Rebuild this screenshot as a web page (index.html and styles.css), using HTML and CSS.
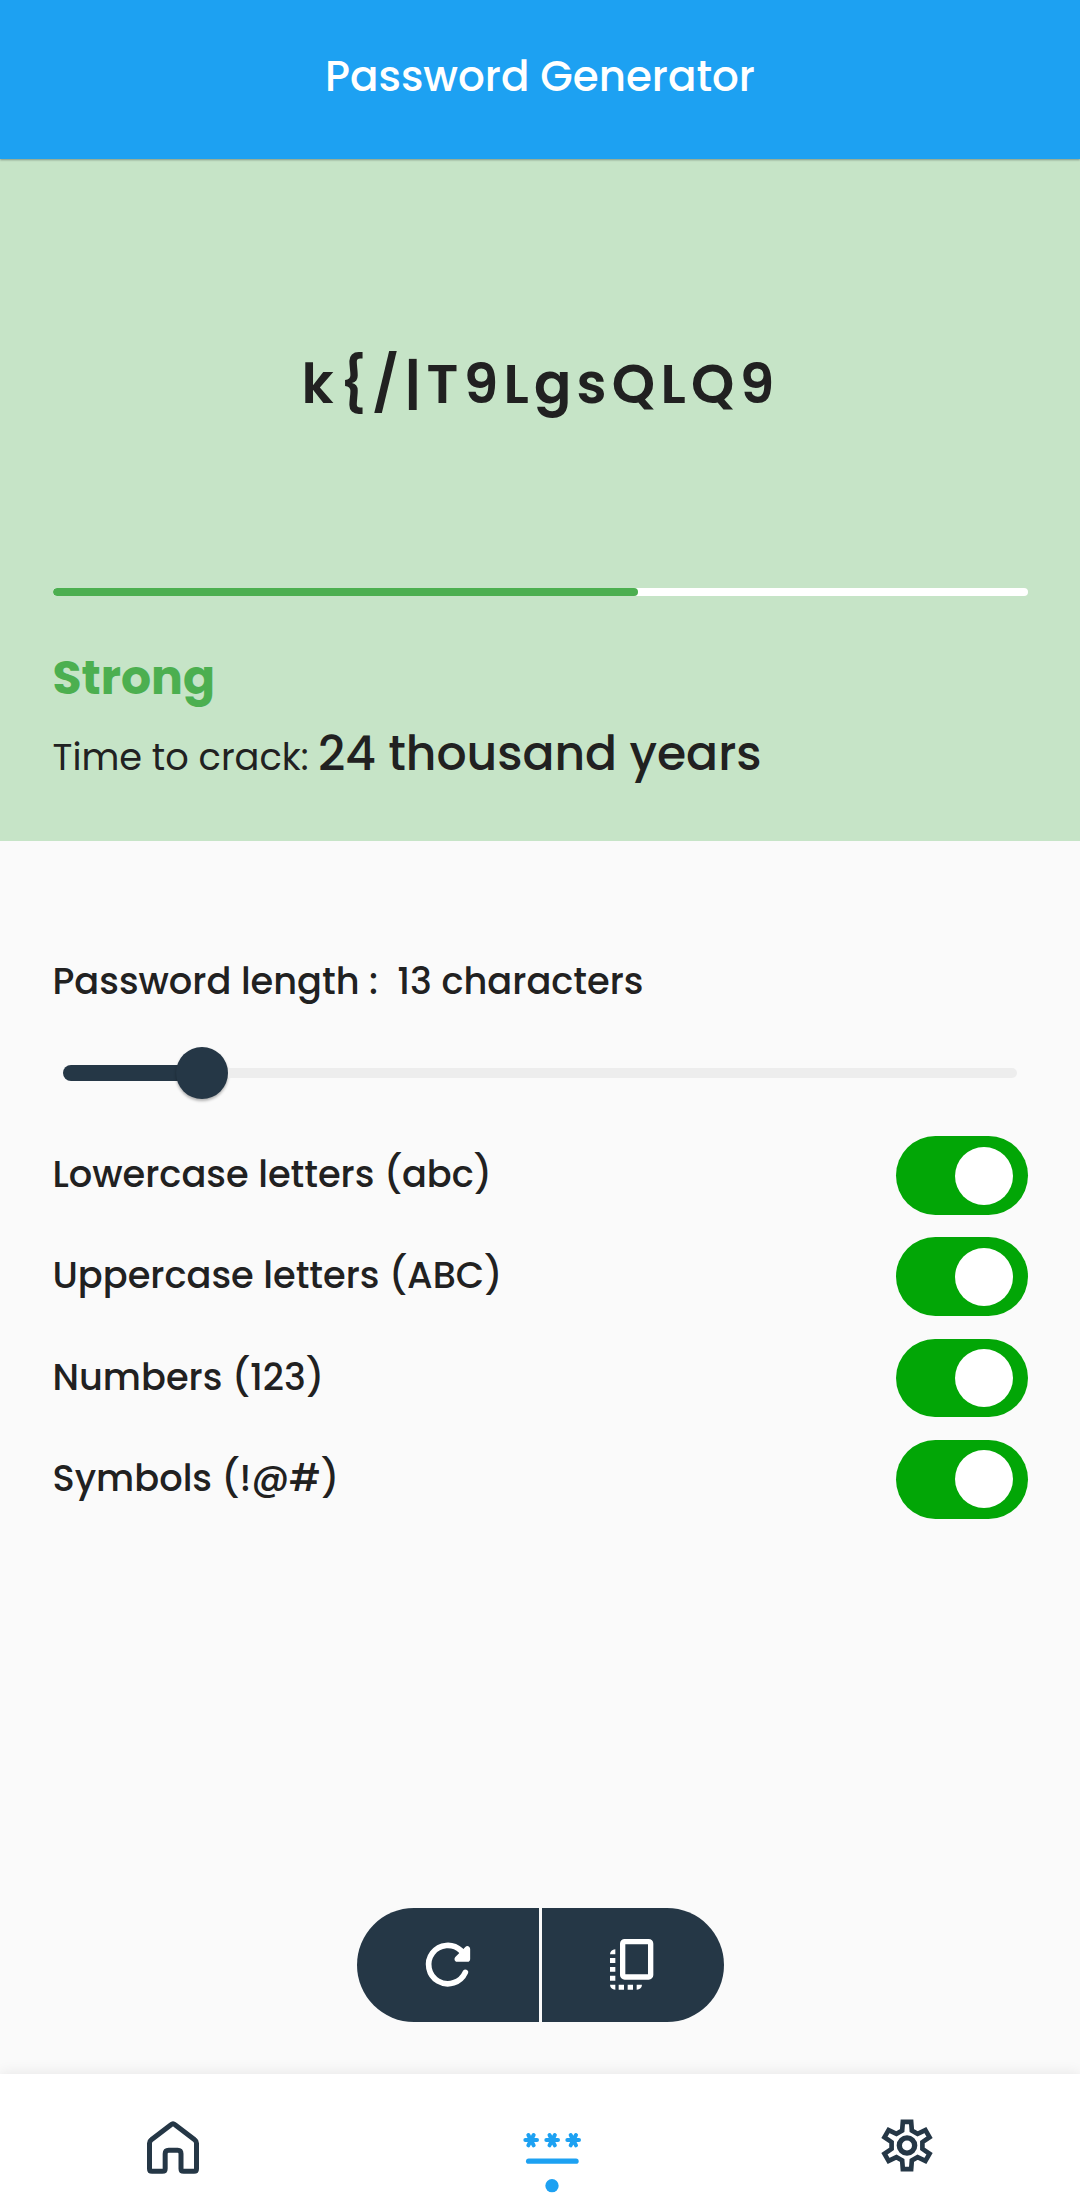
FILE: index.html
```html
<!DOCTYPE html>
<html lang="en">
<head>
<meta charset="utf-8">
<title>Password Generator</title>
<link rel="stylesheet" href="styles.css">
</head>
<body>
<div class="app">
  <header class="header"><h1 class="title">Password Generator</h1></header>
  <section class="result">
    <div class="password">k{/|T9LgsQLQ9</div>
    <div class="meter"><div class="meter-fill" style="width:60%"></div></div>
    <div class="strength">Strong</div>
    <div class="crack"><span class="crack-label">Time to crack:</span><span class="crack-time">24 thousand years</span></div>
  </section>
  <main class="options">
    <div class="length">Password length :&nbsp; 13 characters</div>
    <div class="slider"><div class="slider-fill"></div><div class="thumb"></div><div class="slider-rest"></div></div>
    <div class="rows">
      <div class="row"><span class="label">Lowercase letters (abc)</span><span class="toggle"><span class="knob"></span></span></div>
      <div class="row"><span class="label">Uppercase letters (ABC)</span><span class="toggle"><span class="knob"></span></span></div>
      <div class="row"><span class="label">Numbers (123)</span><span class="toggle"><span class="knob"></span></span></div>
      <div class="row"><span class="label">Symbols (!@#)</span><span class="toggle"><span class="knob"></span></span></div>
    </div>
    <div class="actions">
      <button class="action action-left" aria-label="Regenerate">
        <svg class="action-icon" viewBox="242 146 160 160" fill="none" stroke="#fff" stroke-linecap="round" stroke-linejoin="round">
          <path d="M375 249A57.5 57.5 0 1 1 362 184L372 194" stroke-width="17"/>
          <path d="M381 179V209H351Z" fill="#fff" stroke-width="17"/>
        </svg>
      </button>
      <button class="action action-right" aria-label="Copy">
        <svg class="action-icon copy-icon" viewBox="794 145 160 160" fill="#fff">
          <rect x="847" y="156" width="84" height="106" rx="6" fill="none" stroke="#fff" stroke-width="16"/>
          <path d="M825 179V194H809Q810 180 825 179ZM809 205h16v15h-16zM809 232h16v14h-16zM809 258h16v15h-16zM809 285h16v15Q810 299 809 285ZM835 285h16v15h-16zM862 285h16v15h-16zM889 285h16Q904 299 889 300Z"/>
        </svg>
      </button>
    </div>
  </main>
  <nav class="nav">
    <svg class="nav-icon" viewBox="69 42 180 408" fill="none" stroke="#253746" stroke-width="15" stroke-linejoin="round">
      <path d="M88.500 250Q88.500 243 94 239L153 194Q159 189 165 194L224 239Q229.500 243 229.500 250V326Q229.500 334 222 334H191Q183 334 183 326V281Q183 270.500 173 270.500H146Q135.500 270.500 135.500 281V326Q135.500 334 127 334H96Q88.500 334 88.500 326Z"/>
    </svg>
    <svg class="nav-icon" viewBox="67 42 180 408" fill="none" stroke="#1da1f2" stroke-linecap="round">
      <g stroke-width="12">
        <path d="M77 240H112M86 225L102 256M102 225L86 256"/>
        <path d="M140 240H175M149.500 225L165.500 256M165.500 225L149.500 256"/>
        <path d="M203 240H238M213 225L229 256M229 225L213 256"/>
      </g>
      <path d="M87 303.500H229" stroke-width="16"/>
      <circle cx="157" cy="377" r="20" fill="#1da1f2" stroke="none"/>
    </svg>
    <svg class="nav-icon" viewBox="80 42 180 408" fill="none" stroke="#253746">
      <g transform="translate(170 256.500)">
        <path stroke-width="14" d="M-14.500-45L-12.500-71H12.500L14.500-45L31.700-35.100L55.200-46.300L67.700-24.700L46.200-9.900V9.900L67.700 24.700L55.200 46.300L31.700 35.100L14.500 45L12.500 71H-12.500L-14.500 45L-31.700 35.100L-55.200 46.300L-67.700 24.700L-46.200 9.900V-9.900L-67.700-24.700L-55.200-46.300L-31.700-35.100Z"/>
        <circle r="23" stroke-width="16"/>
      </g>
    </svg>
  </nav>
</div>
</body>
</html>
```
FILE: styles.css
```css
* { box-sizing: border-box; }
body { margin: 0; background: #fafafa; color: #212121; font-family: Poppins, Inter, sans-serif; }
.app { display: flex; flex-direction: column; width: 1080px; height: 2210px; }
.header { height: 159px; padding-top: 47px; background: #1da1f2; box-shadow: 0 1px 2px rgba(0, 0, 0, .35); z-index: 1; }
.title { margin: 0; font-size: 42px; font-weight: 500; line-height: 60px; text-align: center; color: #fff; }
.result { height: 682px; padding: 194.500px 52.500px 0; background: #c6e4c7; }
.password { height: 60px; padding-left: 1px; font-size: 55.125px; font-weight: 600; line-height: 60px; letter-spacing: 5.250px; text-align: center; white-space: nowrap; }
.meter { height: 7.600px; margin-top: 174.900px; border-radius: 4px; background: #fff; overflow: hidden; }
.meter-fill { height: 100%; border-radius: 4px; background: #4caf50; }
.strength { margin-top: 52px; font-size: 47.250px; font-weight: 700; line-height: 60px; color: #4caf50; }
.crack { display: flex; align-items: baseline; gap: 9.500px; margin-top: 16px; line-height: 60px; white-space: nowrap; }
.crack-label { font-size: 36.750px; font-weight: 400; }
.crack-time { font-size: 47.250px; font-weight: 500; }
.options { display: flex; flex-direction: column; flex: 1; padding: 110px 52.500px 0; }
.length { font-size: 36.750px; font-weight: 500; line-height: 60px; }
.slider { display: flex; align-items: center; height: 52px; margin: 36px 10.500px 0; }
.slider-fill { width: 126px; height: 16px; border-radius: 8px 0 0 8px; background: #253746; }
.thumb { width: 52px; height: 52px; margin-left: -13px; border-radius: 50%; background: #253746; box-shadow: 0 2px 3px rgba(0, 0, 0, .3); }
.slider-rest { flex: 1; height: 10.500px; border-radius: 0 5px 5px 0; background: #ededed; }
.rows { display: flex; flex-direction: column; gap: 22.250px; margin-top: 37px; }
.row { display: flex; align-items: center; justify-content: space-between; height: 79px; }
.label { padding-bottom: 3px; font-size: 36.750px; font-weight: 500; line-height: 60px; }
.toggle { display: flex; align-items: center; justify-content: flex-end; width: 131.250px; height: 78.750px; padding-right: 14.500px; border-radius: 39.400px; background: #02a606; }
.knob { width: 58px; height: 58px; border-radius: 50%; background: #fff; }
.actions { display: flex; justify-content: center; gap: 3px; margin-top: auto; margin-bottom: 52.500px; }
.action { display: flex; align-items: center; justify-content: center; width: 182px; height: 113.500px; padding: 0; border: 0; background: #253746; }
.action-left { border-radius: 57px 0 0 57px; }
.action-right { border-radius: 0 57px 57px 0; }
.action-icon { width: 53.333px; height: 53.333px; }
.copy-icon { margin-right: 2px; }
.nav { display: grid; grid-template-columns: 346px 412px 298px; justify-items: center; height: 136px; background: #fff; box-shadow: 0 0 14px rgba(0, 0, 0, .09); }
.nav-icon { width: 60px; height: 136px; }
```
